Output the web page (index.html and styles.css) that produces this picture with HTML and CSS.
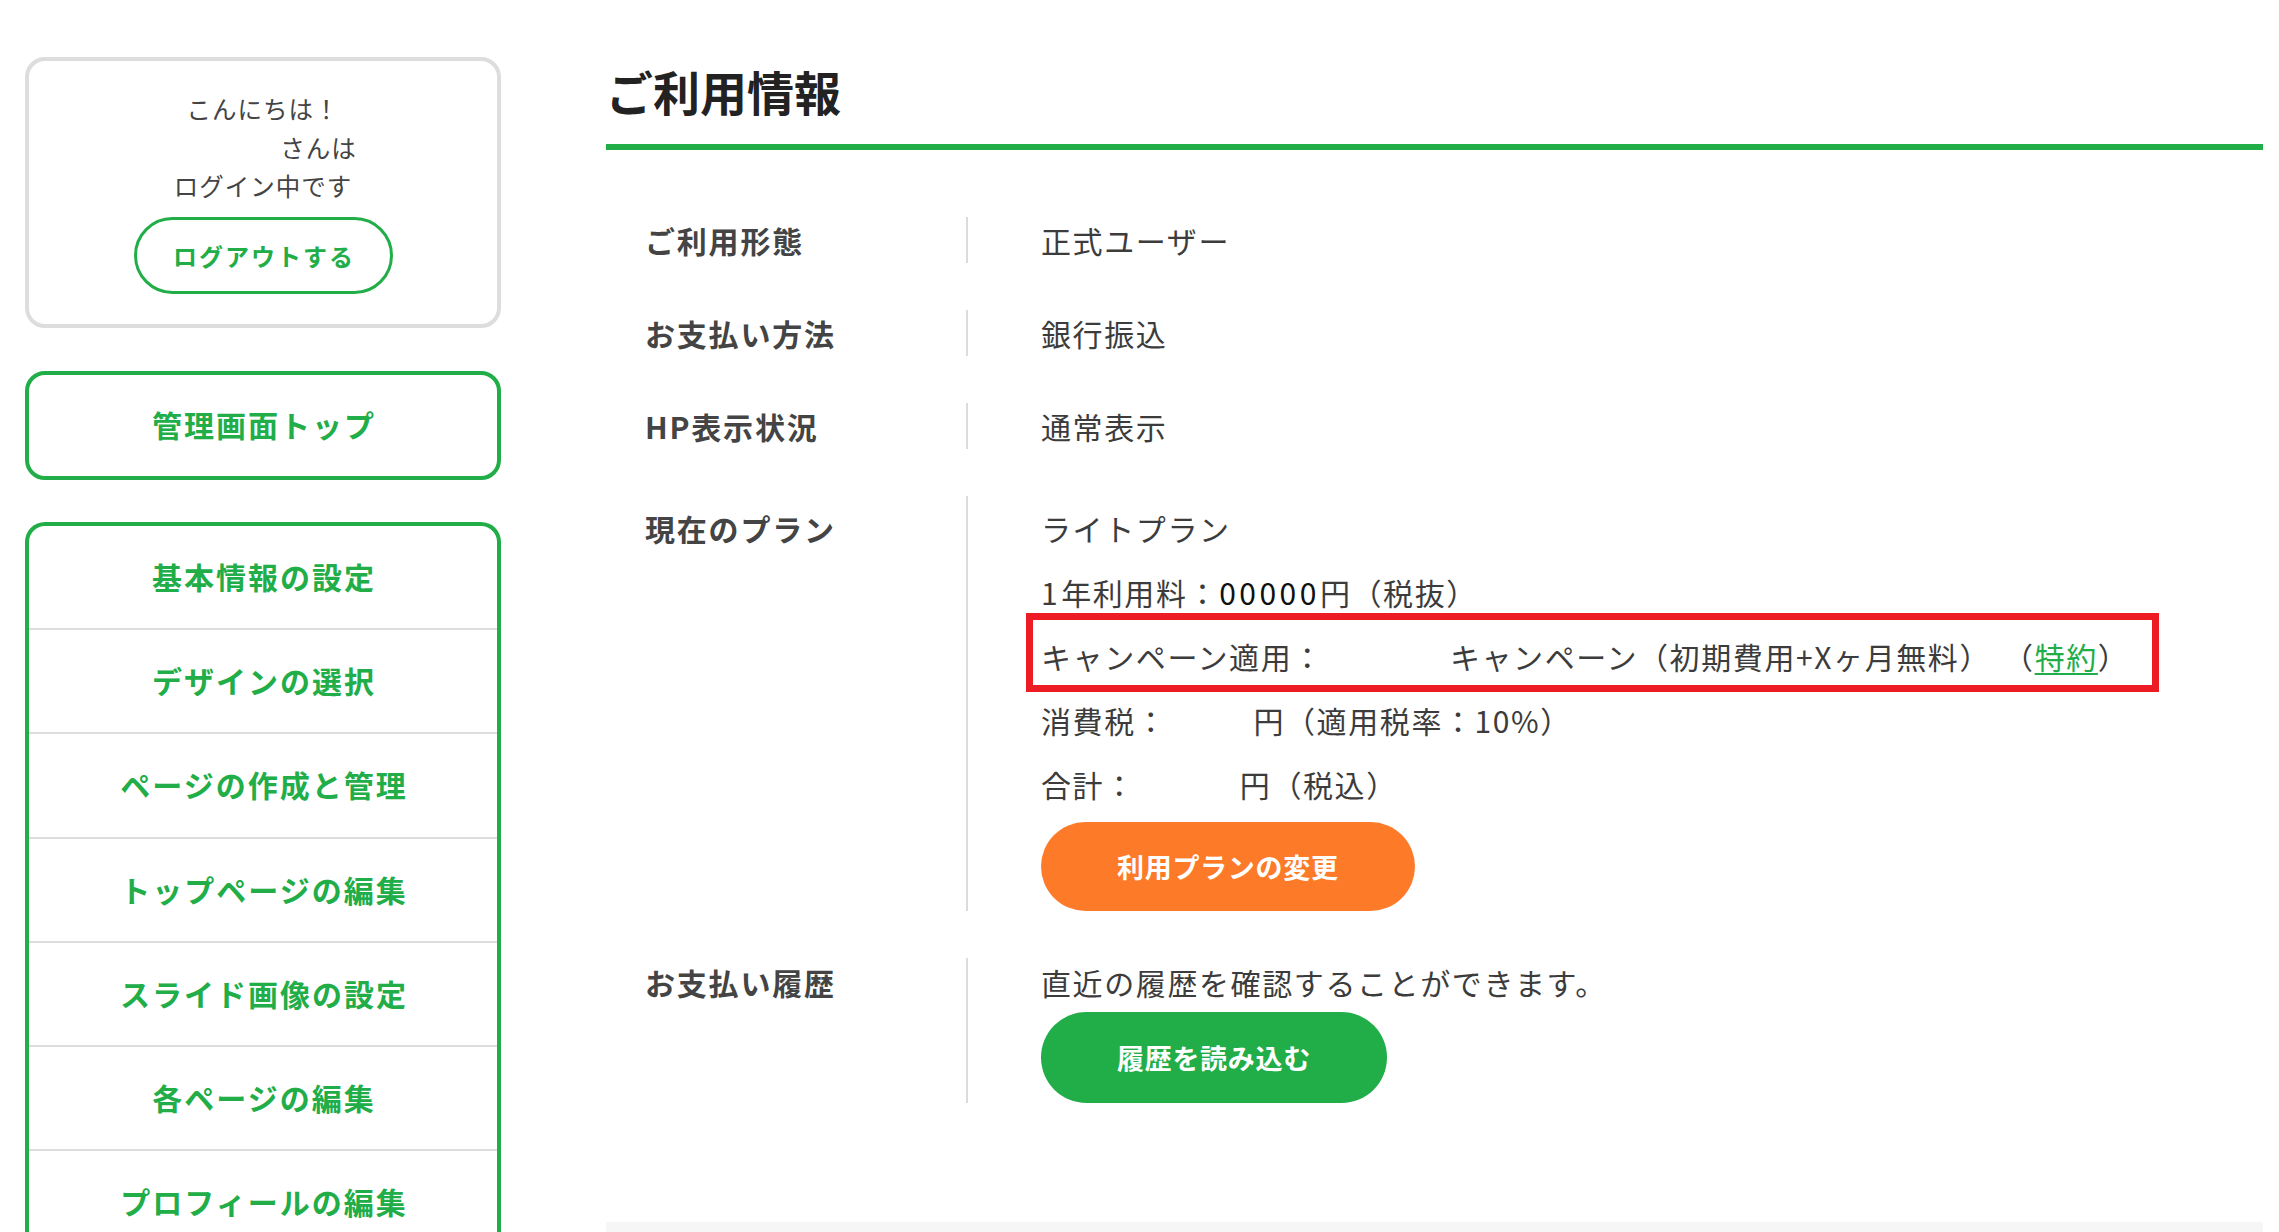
FILE: index.html
```html
<!DOCTYPE html>
<html lang="ja">
<head>
<meta charset="utf-8">
<title>ご利用情報</title>
<link rel="stylesheet" href="styles.css">
</head>
<body>
<div class="page">
  <aside class="sidebar">
    <div class="login-box">
      <p class="greet">こんにちは！</p>
      <p class="greet"><span class="name-blank"></span>さんは</p>
      <p class="greet">ログイン中です</p>
      <a class="logout-btn" href="#">ログアウトする</a>
    </div>
    <a class="top-link" href="#">管理画面トップ</a>
    <nav class="menu">
      <a class="menu-item" href="#">基本情報の設定</a>
      <a class="menu-item" href="#">デザインの選択</a>
      <a class="menu-item" href="#">ページの作成と管理</a>
      <a class="menu-item" href="#">トップページの編集</a>
      <a class="menu-item" href="#">スライド画像の設定</a>
      <a class="menu-item" href="#">各ページの編集</a>
      <a class="menu-item" href="#">プロフィールの編集</a>
    </nav>
  </aside>
  <main class="main">
    <h1 class="title">ご利用情報</h1>
    <div class="info">
      <div class="row row-single">
        <div class="label">ご利用形態</div>
        <div class="value"><div>正式ユーザー</div></div>
      </div>
      <div class="row row-single">
        <div class="label">お支払い方法</div>
        <div class="value"><div>銀行振込</div></div>
      </div>
      <div class="row row-single">
        <div class="label">HP表示状況</div>
        <div class="value"><div>通常表示</div></div>
      </div>
      <div class="row row-plan">
        <div class="label">現在のプラン</div>
        <div class="value">
          <div>ライトプラン</div>
          <div><span class="num">1</span>年利用料：<span class="num num-dark">00000</span>円（税抜）</div>
          <div class="campaign">キャンペーン適用：<span class="blank blank-campaign"></span>キャンペーン（初期費用+Xヶ月無料）<span class="blank blank-note"></span>（<a class="link" href="#">特約</a>）<span class="annot"></span></div>
          <div>消費税：<span class="blank blank-tax"></span>円（適用税率：10%）</div>
          <div>合計：<span class="blank blank-total"></span>円（税込）</div>
          <a class="btn btn-orange" href="#">利用プランの変更</a>
        </div>
      </div>
      <div class="row row-history">
        <div class="label">お支払い履歴</div>
        <div class="value">
          <div>直近の履歴を確認することができます。</div>
          <a class="btn btn-green" href="#">履歴を読み込む</a>
        </div>
      </div>
    </div>
    <div class="footer-band"></div>
  </main>
</div>
</body>
</html>
```
FILE: styles.css
```css
* {
  box-sizing: border-box;
}

html,
body {
  margin: 0;
  padding: 0;
  background: #ffffff;
}

body {
  font-family: "Noto Sans CJK JP", "Noto Sans", sans-serif;
  color: #3c3c3c;
}

.page {
  display: flex;
  align-items: flex-start;
  gap: 105px;
  padding: 57px 16px 0 25px;
}

/* ---------- sidebar ---------- */
.sidebar {
  width: 476px;
  flex: none;
  display: flex;
  flex-direction: column;
}

.login-box {
  height: 271px;
  border: 4px solid #dddddd;
  border-radius: 20px;
  padding: 29px 0;
  text-align: center;
}

.greet {
  margin: 0;
  font-size: 24.5px;
  line-height: 38.5px;
  letter-spacing: 1px;
  color: #444444;
}

.name-blank {
  display: inline-block;
  width: 111px;
}

.logout-btn {
  display: inline-block;
  margin-top: 11.5px;
  width: 259px;
  height: 77px;
  border: 3px solid #21ad47;
  border-radius: 40px;
  line-height: 71px;
  font-size: 24px;
  font-weight: 700;
  letter-spacing: 2px;
  padding-left: 2px;
  color: #21ad47;
  text-decoration: none;
}

.top-link {
  display: block;
  margin-top: 43px;
  height: 109px;
  border: 4px solid #21ad47;
  border-radius: 20px;
  line-height: 99px;
  text-align: center;
  font-size: 30px;
  font-weight: 700;
  letter-spacing: 2px;
  padding-left: 2px;
  color: #21ad47;
  text-decoration: none;
}

.menu {
  margin-top: 42px;
  border: 4px solid #21ad47;
  border-bottom: none;
  border-radius: 20px 20px 0 0;
  display: flex;
  flex-direction: column;
  padding-bottom: 60px;
}

.menu-item {
  display: block;
  height: 104.2px;
  line-height: 100px;
  border-bottom: 2px solid #dddddd;
  text-align: center;
  font-size: 30px;
  font-weight: 700;
  letter-spacing: 2px;
  padding-left: 2px;
  color: #21ad47;
  text-decoration: none;
}

/* ---------- main ---------- */
.main {
  flex: 1;
  min-width: 0;
}

.title {
  margin: 0;
  font-size: 47px;
  line-height: 68px;
  font-weight: 700;
  color: #222222;
  padding-bottom: 19px;
  border-bottom: 6px solid #21ad47;
}

.info {
  margin-top: 67px;
  display: flex;
  flex-direction: column;
  gap: 47px;
}

.row {
  display: flex;
  font-size: 30px;
  letter-spacing: 1.6px;
}

.row-single {
  line-height: 46px;
}

.row-plan {
  line-height: 64px;
}

.row-history {
  line-height: 48px;
}

.label {
  width: 362px;
  flex: none;
  padding-left: 39px;
  border-right: 2px solid #dcdcdc;
  font-weight: 700;
  letter-spacing: 1.8px;
  color: #444444;
}

.value {
  padding-left: 73px;
  display: flex;
  flex-direction: column;
  align-items: flex-start;
  color: #3c3c3c;
}

.num {
  letter-spacing: 3.5px;
}

.num-dark {
  color: #111111;
}

.blank {
  display: inline-block;
}

.blank-campaign {
  width: 126px;
}

.blank-note {
  width: 12px;
}

.blank-tax {
  width: 86px;
}

.blank-total {
  width: 104px;
}

.campaign {
  position: relative;
  white-space: nowrap;
}

.link {
  color: #21ad47;
  text-decoration: underline;
  text-decoration-thickness: 2px;
  text-underline-offset: 4px;
}

.annot {
  position: absolute;
  left: -15px;
  top: -11px;
  width: 1133px;
  height: 79px;
  border: 7px solid #ed1c24;
  pointer-events: none;
}

.btn {
  display: inline-block;
  padding: 0 76px;
  border-radius: 46px;
  color: #ffffff;
  font-size: 27px;
  font-weight: 700;
  letter-spacing: 0.7px;
  text-decoration: none;
}

.btn-orange {
  margin-top: 6px;
  height: 89px;
  line-height: 89px;
  background: #fd7a28;
}

.btn-green {
  margin-top: 6px;
  height: 91px;
  line-height: 91px;
  background: #21ad47;
}

.footer-band {
  margin-top: 119px;
  height: 80px;
  background: #f6f6f6;
}
```
